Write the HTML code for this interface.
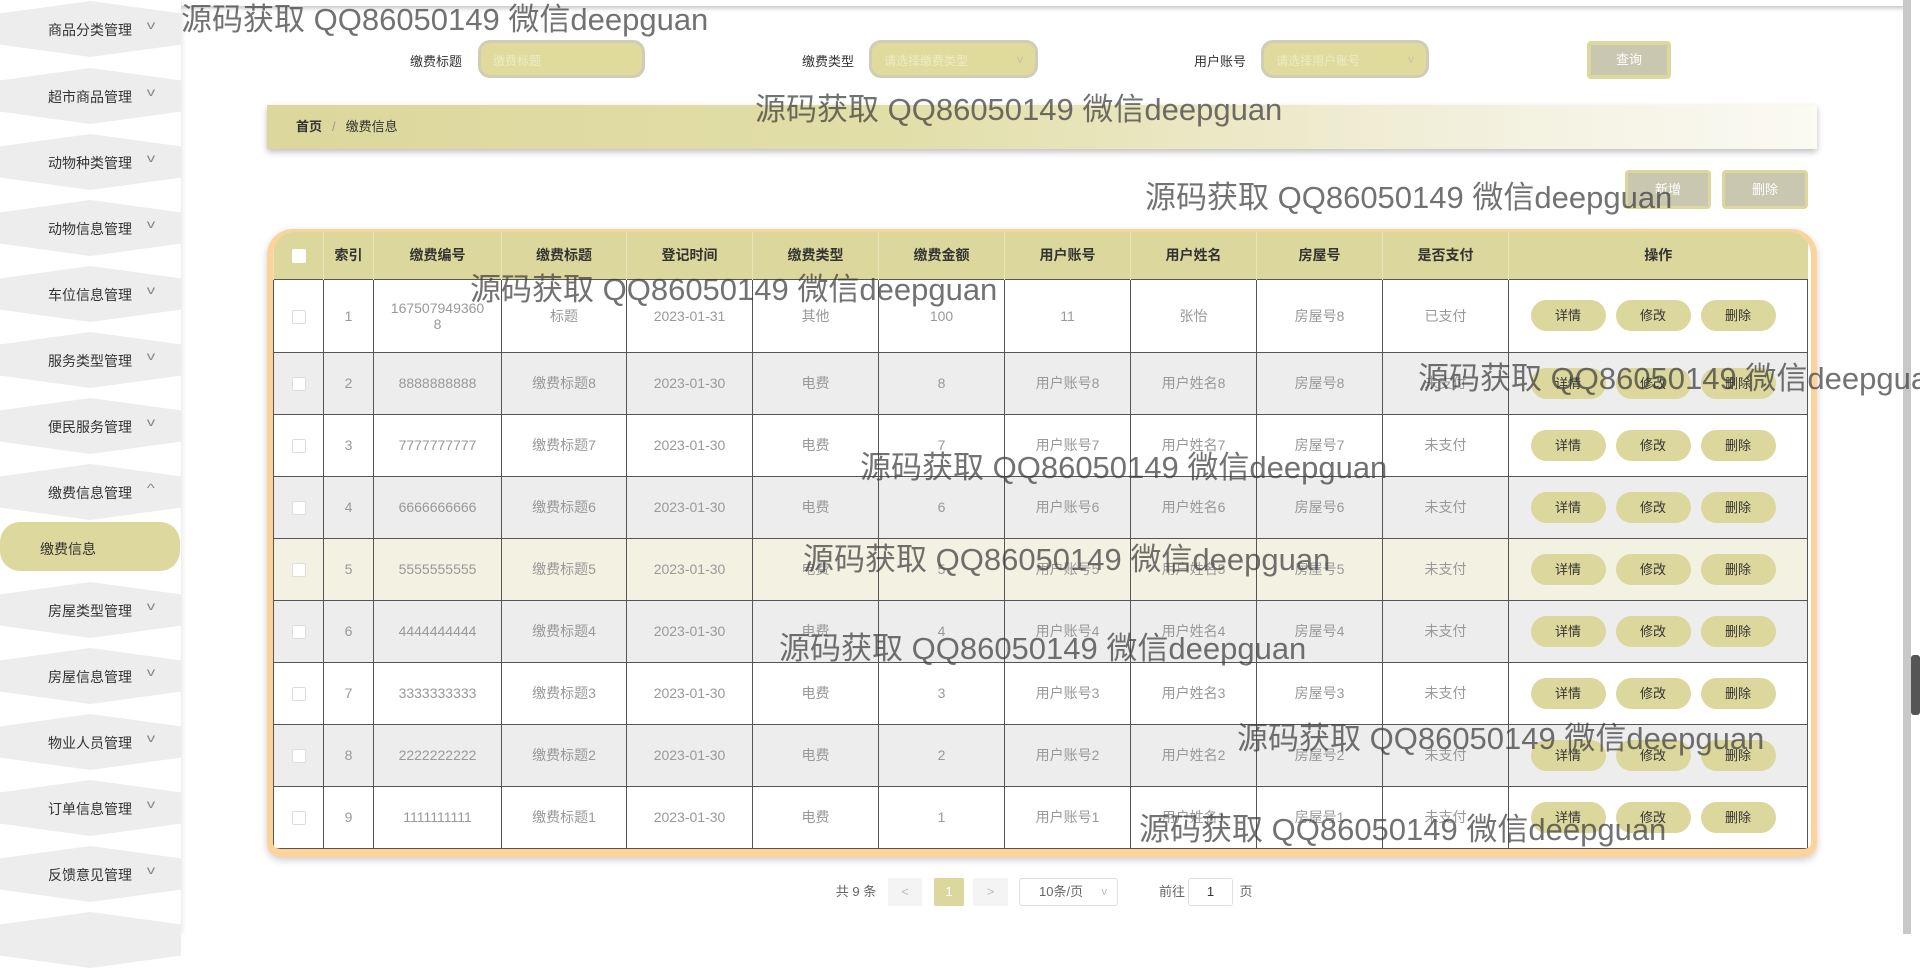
<!DOCTYPE html>
<html><head><meta charset="utf-8"><style>
*{box-sizing:border-box;margin:0;padding:0}
body{width:1920px;height:934px;overflow:hidden;background:#fff;font-family:"Liberation Sans","Noto Sans CJK SC",sans-serif;position:relative;color:#333}
.abs{position:absolute}
.side{position:absolute;left:0;top:0;width:181px;height:934px;background:#fff;box-shadow:2px 0 4px rgba(0,0,0,.08)}
.hex{position:absolute;left:0;width:181px;height:56px;background:#ededed;clip-path:polygon(0 22%,50% 0,100% 22%,100% 78%,50% 100%,0 78%);font-size:14px;color:#333}
.hex span{position:absolute;left:48px;top:19px}
.hex i{position:absolute;left:148px;top:17px;font-style:normal;font-size:12px;color:#888;transform:scaleX(1.4)}
.sub{position:absolute;left:0;top:522px;width:180px;height:49px;background:#ddd89e;border-radius:20px;font-size:14px;padding:17px 0 0 40px}
.lbl{position:absolute;font-size:13px;color:#333;top:51px}
.inp{position:absolute;top:40px;height:38px;background:#e0db9c;border:3px solid #cfcdb8;border-radius:12px;font-size:12px;color:#eeeac8;padding:9px 12px}
.wm{position:absolute;font-size:31px;line-height:1;color:rgba(60,60,60,.72);white-space:nowrap;z-index:10;font-family:"Liberation Sans","Noto Sans CJK SC",sans-serif}
.btn2{position:absolute;top:170px;height:39px;width:86px;background:#c9c7b0;border:3px solid #dcd79c;border-radius:4px;color:#fff;font-size:13px;text-align:center;line-height:33px}
table{border-collapse:collapse;table-layout:fixed;position:absolute;left:0;top:0}
td,th{text-align:center;font-size:14px;border:1px solid #555;color:#999;font-weight:normal}
th{background:#dcd79c;color:#333;font-weight:bold;border:none;border-left:1px solid #e8e4b8;height:47px}
tr.g td{background:#ededed}
tr.h td{background:#f3f1e1}
tr td{height:62px;background:#fff}
tr.r1 td{height:73px}
td:last-child{padding-right:10px}
.cb{display:inline-block;width:14px;height:14px;background:#fff;border:1px solid #ddd;border-radius:2px;vertical-align:middle}
th .cb{border-color:#fff}
.ab{display:inline-block;width:75px;height:31px;line-height:31px;border-radius:16px;background:#dcd79c;color:#333;font-size:13px;margin:0 5px}
.pg{position:absolute;top:878px;height:28px;font-size:13px;color:#666;line-height:28px;text-align:center}
</style></head><body>
<div class="abs" style="left:181px;top:0;width:1725px;height:6px;box-shadow:0 2px 5px rgba(0,0,0,.25);background:#fff"></div>
<div class="abs" style="left:1903px;top:0;width:8px;height:934px;background:#c8c8c8"></div>
<div class="abs" style="left:1911px;top:655px;width:9px;height:60px;background:#555;border-radius:3px"></div>
<div class="side">
<div class="hex" style="top:1px"><span>商品分类管理</span><i>v</i></div>
<div class="hex" style="top:68px"><span>超市商品管理</span><i>v</i></div>
<div class="hex" style="top:134px"><span>动物种类管理</span><i>v</i></div>
<div class="hex" style="top:200px"><span>动物信息管理</span><i>v</i></div>
<div class="hex" style="top:266px"><span>车位信息管理</span><i>v</i></div>
<div class="hex" style="top:332px"><span>服务类型管理</span><i>v</i></div>
<div class="hex" style="top:398px"><span>便民服务管理</span><i>v</i></div>
<div class="hex" style="top:464px"><span>缴费信息管理</span><i>^</i></div>
<div class="sub">缴费信息</div>
<div class="hex" style="top:582px"><span>房屋类型管理</span><i>v</i></div>
<div class="hex" style="top:648px"><span>房屋信息管理</span><i>v</i></div>
<div class="hex" style="top:714px"><span>物业人员管理</span><i>v</i></div>
<div class="hex" style="top:780px"><span>订单信息管理</span><i>v</i></div>
<div class="hex" style="top:846px"><span>反馈意见管理</span><i>v</i></div>
<div class="hex" style="top:912px"><span></span></div>
</div>

<div class="lbl" style="left:410px">缴费标题</div>
<div class="inp" style="left:478px;width:167px">缴费标题</div>
<div class="lbl" style="left:802px">缴费类型</div>
<div class="inp" style="left:869px;width:169px">请选择缴费类型 <span style="position:absolute;right:12px;color:#c8c4a0">v</span></div>
<div class="lbl" style="left:1194px">用户账号</div>
<div class="inp" style="left:1261px;width:168px">请选择用户账号 <span style="position:absolute;right:12px;color:#c8c4a0">v</span></div>
<div class="abs" style="left:1587px;top:41px;width:84px;height:38px;background:#c9c7b0;border:4px solid #dcd79c;border-radius:4px;color:#fff;font-size:13px;text-align:center;line-height:30px">查询</div>

<div class="abs" style="left:267px;top:105px;width:1550px;height:44px;background:linear-gradient(90deg,#dcd79c 0%,#e2dea8 40%,#f3f1df 80%,#fbfaf3 100%);box-shadow:0 3px 6px rgba(0,0,0,.25);font-size:13px;line-height:44px;padding-left:29px"><b style="color:#333">首页</b><span style="color:#999;margin:0 10px">/</span><span style="color:#333">缴费信息</span></div>

<div class="btn2" style="left:1625px">新增</div>
<div class="btn2" style="left:1722px">删除</div>

<div class="abs" style="left:267px;top:229px;width:1550px;height:628px;border-style:solid;border-color:#fdd39a;border-width:3px 6px 8px 6px;border-radius:26px 26px 14px 14px;box-shadow:0 3px 8px rgba(0,0,0,.2);overflow:hidden;background:#fff">
<table>
<colgroup><col style="width:50px"><col style="width:50px"><col style="width:128px"><col style="width:125px"><col style="width:126px"><col style="width:126px"><col style="width:126px"><col style="width:126px"><col style="width:126px"><col style="width:126px"><col style="width:126px"><col style="width:299px"></colgroup>
<tr><th><span class="cb"></span></th><th>索引</th><th>缴费编号</th><th>缴费标题</th><th>登记时间</th><th>缴费类型</th><th>缴费金额</th><th>用户账号</th><th>用户姓名</th><th>房屋号</th><th>是否支付</th><th>操作</th></tr>
<tr class="r1"><td><span class="cb"></span></td><td>1</td><td>167507949360<br>8</td><td>标题</td><td>2023-01-31</td><td>其他</td><td>100</td><td>11</td><td>张怡</td><td>房屋号8</td><td>已支付</td><td><span class="ab">详情</span><span class="ab">修改</span><span class="ab">删除</span></td></tr>
<tr class="g"><td><span class="cb"></span></td><td>2</td><td>8888888888</td><td>缴费标题8</td><td>2023-01-30</td><td>电费</td><td>8</td><td>用户账号8</td><td>用户姓名8</td><td>房屋号8</td><td>未支付</td><td><span class="ab">详情</span><span class="ab">修改</span><span class="ab">删除</span></td></tr>
<tr><td><span class="cb"></span></td><td>3</td><td>7777777777</td><td>缴费标题7</td><td>2023-01-30</td><td>电费</td><td>7</td><td>用户账号7</td><td>用户姓名7</td><td>房屋号7</td><td>未支付</td><td><span class="ab">详情</span><span class="ab">修改</span><span class="ab">删除</span></td></tr>
<tr class="g"><td><span class="cb"></span></td><td>4</td><td>6666666666</td><td>缴费标题6</td><td>2023-01-30</td><td>电费</td><td>6</td><td>用户账号6</td><td>用户姓名6</td><td>房屋号6</td><td>未支付</td><td><span class="ab">详情</span><span class="ab">修改</span><span class="ab">删除</span></td></tr>
<tr class="h"><td><span class="cb"></span></td><td>5</td><td>5555555555</td><td>缴费标题5</td><td>2023-01-30</td><td>电费</td><td>5</td><td>用户账号5</td><td>用户姓名5</td><td>房屋号5</td><td>未支付</td><td><span class="ab">详情</span><span class="ab">修改</span><span class="ab">删除</span></td></tr>
<tr class="g"><td><span class="cb"></span></td><td>6</td><td>4444444444</td><td>缴费标题4</td><td>2023-01-30</td><td>电费</td><td>4</td><td>用户账号4</td><td>用户姓名4</td><td>房屋号4</td><td>未支付</td><td><span class="ab">详情</span><span class="ab">修改</span><span class="ab">删除</span></td></tr>
<tr><td><span class="cb"></span></td><td>7</td><td>3333333333</td><td>缴费标题3</td><td>2023-01-30</td><td>电费</td><td>3</td><td>用户账号3</td><td>用户姓名3</td><td>房屋号3</td><td>未支付</td><td><span class="ab">详情</span><span class="ab">修改</span><span class="ab">删除</span></td></tr>
<tr class="g"><td><span class="cb"></span></td><td>8</td><td>2222222222</td><td>缴费标题2</td><td>2023-01-30</td><td>电费</td><td>2</td><td>用户账号2</td><td>用户姓名2</td><td>房屋号2</td><td>未支付</td><td><span class="ab">详情</span><span class="ab">修改</span><span class="ab">删除</span></td></tr>
<tr><td><span class="cb"></span></td><td>9</td><td>1111111111</td><td>缴费标题1</td><td>2023-01-30</td><td>电费</td><td>1</td><td>用户账号1</td><td>用户姓名1</td><td>房屋号1</td><td>未支付</td><td><span class="ab">详情</span><span class="ab">修改</span><span class="ab">删除</span></td></tr>
</table>
</div>

<div class="pg" style="left:831px;width:50px">共 9 条</div>
<div class="pg" style="left:888px;width:34px;background:#f4f4f5;color:#bbb">&lt;</div>
<div class="pg" style="left:934px;width:30px;background:#dcd79c;color:#fff;border-radius:2px">1</div>
<div class="pg" style="left:973px;width:35px;background:#f4f4f5;color:#bbb">&gt;</div>
<div class="pg" style="left:1019px;width:99px;border:1px solid #dcdfe6;border-radius:3px;text-align:left;padding-left:19px;line-height:26px">10条/页<span style="position:absolute;right:10px;color:#bbb;font-size:11px">v</span></div>
<div class="pg" style="left:1157px;width:30px">前往</div>
<div class="pg" style="left:1188px;width:45px;border:1px solid #dcdfe6;border-radius:3px;line-height:26px;color:#333">1</div>
<div class="pg" style="left:1238px;width:16px">页</div>

<div class="wm" style="left:181px;top:4px">源码获取 QQ86050149 微信deepguan</div>
<div class="wm" style="left:755px;top:94px">源码获取 QQ86050149 微信deepguan</div>
<div class="wm" style="left:1145px;top:182px">源码获取 QQ86050149 微信deepguan</div>
<div class="wm" style="left:470px;top:274px">源码获取 QQ86050149 微信deepguan</div>
<div class="wm" style="left:1418px;top:363px">源码获取 QQ86050149 微信deepguan</div>
<div class="wm" style="left:860px;top:452px">源码获取 QQ86050149 微信deepguan</div>
<div class="wm" style="left:803px;top:544px">源码获取 QQ86050149 微信deepguan</div>
<div class="wm" style="left:779px;top:633px">源码获取 QQ86050149 微信deepguan</div>
<div class="wm" style="left:1237px;top:723px">源码获取 QQ86050149 微信deepguan</div>
<div class="wm" style="left:1139px;top:814px">源码获取 QQ86050149 微信deepguan</div>
</body></html>
